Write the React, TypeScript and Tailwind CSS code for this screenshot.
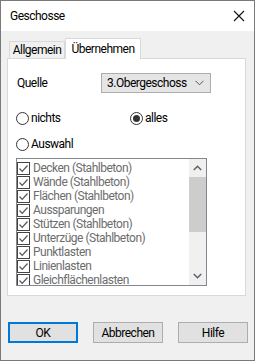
import { useState } from 'react'

const items = [
  'Decken (Stahlbeton)',
  'Wände (Stahlbeton)',
  'Flächen (Stahlbeton)',
  'Aussparungen',
  'Stützen (Stahlbeton)',
  'Unterzüge (Stahlbeton)',
  'Punktlasten',
  'Linienlasten',
  'Gleichflächenlasten',
]

function Radio({ checked, label }: { checked?: boolean; label: string }) {
  return (
    <div className="flex items-center h-[14px]">
      <span className="w-[13px] h-[13px] rounded-full border border-[#333] bg-white flex items-center justify-center">
        {checked && <span className="w-[7px] h-[7px] rounded-full bg-[#333]" />}
      </span>
      <span className="ml-[2px] text-[12px] text-black">{label}</span>
    </div>
  )
}

function Check() {
  return (
    <span className="w-[13px] h-[13px] border border-[#444] bg-white flex items-center justify-center shrink-0">
      <svg width="11" height="11" viewBox="0 0 11 11">
        <path d="M1.5 5.5 L4.2 8.3 L9.5 2.5" fill="none" stroke="#555" strokeWidth="1.2" />
      </svg>
    </span>
  )
}

export default function App() {
  const [tab] = useState(1)

  return (
    <div className="w-[255px] h-[361px] border border-[#7a7a7a] bg-[#f0f0f0] flex flex-col overflow-hidden tracking-[-0.5px]" style={{ fontFamily: 'Roboto, "Liberation Sans", Arial, sans-serif' }}>
      {/* title bar */}
      <div className="h-[30px] bg-white flex items-center justify-between pl-[9px] pr-[9px] shrink-0">
        <span className="text-[12px] text-black">Geschosse</span>
        <svg width="12" height="12" viewBox="0 0 12 12">
          <path d="M1 1 L11 11 M11 1 L1 11" stroke="#111" strokeWidth="1.1" />
        </svg>
      </div>

      <div className="flex flex-col px-[6px] pt-[7px]">
        {/* tabs */}
        <div className="flex items-end h-[20px] pl-[2px] relative z-10">
          <div className="h-[17px] w-[56px] border border-b-0 border-[#d9d9d9] bg-[#f0f0f0] flex items-center justify-center text-[12px]">
            Allgemein
          </div>
          <div className={`h-[21px] w-[76px] -mb-[1px] border border-b-0 border-[#d9d9d9] bg-white flex items-center justify-center text-[12px] ${tab === 1 ? '' : ''}`}>
            Übernehmen
          </div>
        </div>

        {/* panel */}
        <div className="h-[238px] w-[239px] border border-[#d9d9d9] bg-white pl-[8px] pt-[14px] flex flex-col">
          <div className="flex items-center h-[20px]">
            <span className="w-[85px] text-[12px] pl-[1px]">Quelle</span>
            <div className="w-[110px] h-[20px] border border-[#adadad] bg-[#e5e5e5] flex items-center justify-between pl-[5px] pr-[6px]">
              <span className="text-[12px]">3.Obergeschoss</span>
              <svg width="9" height="6" viewBox="0 0 9 6">
                <path d="M0.5 0.8 L4.5 4.8 L8.5 0.8" fill="none" stroke="#555" strokeWidth="1" />
              </svg>
            </div>
          </div>

          <div className="flex mt-[18px]">
            <div className="w-[114px]"><Radio label="nichts" /></div>
            <Radio checked label="alles" />
          </div>

          <div className="mt-[12px]">
            <Radio label="Auswahl" />
          </div>

          <div className="mt-[7px] w-[191px] h-[128px] border border-[#828790] bg-white flex overflow-hidden">
            <div className="flex-1 pt-[2px] overflow-hidden">
              {items.map((it) => (
                <div key={it} className="h-[14px] flex items-center">
                  <Check />
                  <span className="ml-[3px] text-[12px] text-[#6d6d6d] whitespace-nowrap">{it}</span>
                </div>
              ))}
            </div>
            <div className="w-[17px] bg-[#f0f0f0] flex flex-col">
              <div className="h-[18px] flex items-center justify-center">
                <svg width="9" height="6" viewBox="0 0 9 6">
                  <path d="M0.8 5 L4.5 1.3 L8.2 5" fill="none" stroke="#606060" strokeWidth="1.5" />
                </svg>
              </div>
              <div className="h-[55px] bg-[#cdcdcd]" />
              <div className="flex-1" />
              <div className="h-[18px] flex items-center justify-center">
                <svg width="9" height="6" viewBox="0 0 9 6">
                  <path d="M0.8 1 L4.5 4.7 L8.2 1" fill="none" stroke="#606060" strokeWidth="1.5" />
                </svg>
              </div>
            </div>
          </div>
        </div>

        {/* buttons */}
        <div className="flex justify-between mt-[26px] pl-[1px] pr-[0px]">
          <button className="w-[70px] h-[21px] border-2 border-[#0078d7] bg-[#e1e1e1] text-[12px]">OK</button>
          <button className="w-[70px] h-[21px] border border-[#adadad] bg-[#e1e1e1] text-[12px]">Abbrechen</button>
          <button className="w-[70px] h-[21px] border border-[#adadad] bg-[#e1e1e1] text-[12px]">Hilfe</button>
        </div>
      </div>
    </div>
  )
}
